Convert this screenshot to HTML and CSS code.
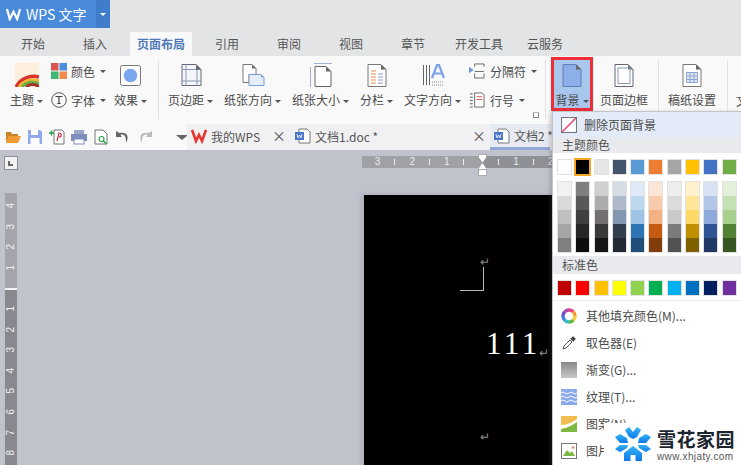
FILE: index.html
```html
<!DOCTYPE html>
<html lang="zh-CN">
<head>
  <meta charset="UTF-8">
  <title>WPS 文字</title>
  <link rel="stylesheet" href="styles.css">
</head>
<body>
  <div class="titlebar">
    <div class="app-btn">
      <svg class="app-logo" viewBox="0 0 16 14"><path d="M1 1l3 11 4-8 4 8 3-11" fill="none" stroke="#fff" stroke-width="2.4"/></svg>
      <span class="app-name">WPS 文字</span>
      <span class="app-drop"><i class="caret white"></i></span>
    </div>
  </div>
  <div class="tabs">
    <div class="tab">开始</div>
    <div class="tab">插入</div>
    <div class="tab wide active">页面布局</div>
    <div class="tab">引用</div>
    <div class="tab">审阅</div>
    <div class="tab">视图</div>
    <div class="tab">章节</div>
    <div class="tab wide">开发工具</div>
    <div class="tab">云服务</div>
  </div>

  <div class="ribbon">
    <div class="group first">
      <div class="item">
        <svg class="big" viewBox="0 0 24 24">
          <rect width="24" height="24" fill="#fdeede"/>
          <path d="M1 24A20 19 0 0 1 24 14" fill="none" stroke="#d8322a" stroke-width="3.5"/>
          <path d="M4 24A16 15 0 0 1 24 18" fill="none" stroke="#f2b430" stroke-width="3"/>
          <path d="M7 24A13 12 0 0 1 24 21" fill="none" stroke="#62b046" stroke-width="3"/>
          <path d="M11 24A9 8 0 0 1 24 24" fill="none" stroke="#a83228" stroke-width="3"/>
        </svg>
        <div class="label">主题<i class="caret"></i></div>
      </div>
      <div class="stack">
        <div class="row">
          <svg class="small" viewBox="0 0 16 16"><rect width="7.5" height="7.5" fill="#d9534f"/><rect x="8.5" width="7.5" height="7.5" fill="#4a8ce0"/><rect y="8.5" width="7.5" height="7.5" fill="#3db870"/><rect x="8.5" y="8.5" width="7.5" height="7.5" fill="#f08a4b"/></svg>
          <span>颜色</span><i class="caret"></i>
        </div>
        <div class="row">
          <svg class="small" viewBox="0 0 16 16"><circle cx="8" cy="8" r="7.3" fill="none" stroke="#555"/><path d="M4.5 4.5h7M8 4.5v7M6.3 11.5h3.4" fill="none" stroke="#444" stroke-width="1.2"/></svg>
          <span>字体</span><i class="caret"></i>
        </div>
      </div>
      <div class="item">
        <svg class="big" viewBox="0 0 24 24"><rect x="1.5" y="2.5" width="20" height="20" rx="2" fill="#fff" stroke="#777"/><circle cx="11.5" cy="12.5" r="6.8" fill="#7aa5ef"/></svg>
        <div class="label">效果<i class="caret"></i></div>
      </div>
    </div>

    <div class="group second">
      <div class="item">
        <svg class="big" viewBox="0 0 24 24"><path d="M3 1.5h14l5 5v16H3z" fill="#f4f6fb" stroke="#667"/><path d="M3 6.5h19M3 18h19M7 1.5v21M18 6.5v16" fill="none" stroke="#8a9ab8"/><path d="M17 1.5l5 5h-5z" fill="#666"/></svg>
        <div class="label">页边距<i class="caret"></i></div>
      </div>
      <div class="item">
        <svg class="big" viewBox="0 0 24 24"><path d="M2 1.5h9l4 4v6H8v8H2z" fill="#fff" stroke="#777"/><path d="M11 1.5l4 4h-4z" fill="#666"/><path d="M8 11.5h12l3 3v8H8z" fill="#e6eefb" stroke="#7a99cc"/><path d="M20 11.5l3 3h-3z" fill="#7a99cc"/></svg>
        <div class="label">纸张方向<i class="caret"></i></div>
      </div>
      <div class="item">
        <svg class="big" viewBox="0 0 24 24"><path d="M5 .5h18M1.500 4v20" fill="none" stroke="#9db2d6"/><path d="M6 3.500h11l5 5v15H6z" fill="#fff" stroke="#666"/><path d="M17 3.500l5 5h-5z" fill="#666"/></svg>
        <div class="label">纸张大小<i class="caret"></i></div>
      </div>
      <div class="item">
        <svg class="big" viewBox="0 0 24 24"><path d="M3 1.500h13l5 5v17H3z" fill="#fff" stroke="#777"/><path d="M16 1.500l5 5h-5z" fill="#666"/><path d="M6 8h5M6 11h5M6 14h5M6 17h5M6 20h5" stroke="#e8874e"/><path d="M13 11h5M13 14h5M13 17h5M13 20h5" stroke="#8a9ab8"/></svg>
        <div class="label">分栏<i class="caret"></i></div>
      </div>
      <div class="item">
        <svg class="big" viewBox="0 0 24 24"><path d="M2.500 2v20M5.500 2v20M8.500 2v20" stroke="#666"/><path d="M11 15l5-13h2l5 13M13 10.500h8" fill="none" stroke="#7aa0e8" stroke-width="2.200"/><path d="M11 19h12M11 22h12" stroke="#8a8a8a" stroke-dasharray="1 1"/></svg>
        <div class="label">文字方向<i class="caret"></i></div>
      </div>
      <div class="stack tight">
        <div class="row">
          <svg class="small" viewBox="0 0 17 17"><path d="M0 4l5 3.500L0 11z" fill="#6f95dc"/><path d="M6 4V1h10v3M6 9h10M6 11v5h10v-5" fill="none" stroke="#666"/></svg>
          <span>分隔符</span><i class="caret"></i>
        </div>
        <div class="row">
          <svg class="small" viewBox="0 0 17 17"><path d="M6 1h8l2 2v13H6z" fill="#fff" stroke="#666"/><path d="M8 5h6M8 8h6" stroke="#d9534f"/><path d="M1 2h3M1 5.500h3M1 9h3M1 12.500h3M1 16h3" stroke="#555"/></svg>
          <span>行号</span><i class="caret"></i>
        </div>
      </div>
      <span class="launcher"></span>
    </div>

    <div class="group third">
      <div class="item picked">
        <svg class="big" viewBox="0 0 24 24"><path d="M3 1.500h13l5 5v17H3z" fill="#8caee9" stroke="#5f7fb8"/><path d="M16 1.500l5 5h-5z" fill="#666"/></svg>
        <div class="label">背景<i class="caret"></i></div>
      </div>
      <div class="item">
        <svg class="big" viewBox="0 0 24 24"><path d="M3 1.500h13l5 5v17H3z" fill="#fff" stroke="#667"/><path d="M16 1.500l5 5h-5z" fill="#666"/><rect x="6" y="5" width="12" height="15.500" fill="none" stroke="#8a9ab8"/></svg>
        <div class="label">页面边框</div>
      </div>
    </div>

    <div class="group fourth">
      <div class="item">
        <svg class="big" viewBox="0 0 24 24"><path d="M3 1.500h13l5 5v17H3z" fill="#fff" stroke="#777"/><path d="M16 1.500l5 5h-5z" fill="#666"/><path d="M6.500 9.500h11v10h-11zM6.500 13h11M6.500 16.500h11M10 9.500v10M14 9.500v10" fill="#dfe7f5" stroke="#8ea6cf"/></svg>
        <div class="label">稿纸设置</div>
      </div>
    </div>

    <div class="group fifth"><div class="label">文字</div></div>
  </div>

  <div class="docbar">
    <div class="quick">
      <svg class="qa" viewBox="0 0 16 16"><path d="M1 3h5l1 2h6v2H4L1 14z" fill="#c9832a"/><path d="M4 7h12l-3 7H1z" fill="#f39a35"/></svg>
      <svg class="qa" viewBox="0 0 16 16"><path d="M1 1h12l2 2v12H1z" fill="#92a9ec"/><rect x="4" y="1" width="7" height="5" fill="#fff"/><rect x="3.500" y="9" width="9" height="6" fill="#fff"/></svg>
      <svg class="qa" viewBox="0 0 16 16"><path d="M5 1h8l2 2v12H5z" fill="#fff" stroke="#777"/><path d="M0 4h5M2.500 1.500v5" stroke="#2ea44f" stroke-width="1.500"/><path d="M8 12l2-8c3 0 3 4 0 4" fill="none" stroke="#c8324a" stroke-width="1.200"/></svg>
      <svg class="qa" viewBox="0 0 16 16"><rect x="3" y="1" width="10" height="4" fill="#9aa6cc"/><rect y="5" width="16" height="7" fill="#7f8dbb"/><rect x="3" y="10" width="10" height="5" fill="#fff" stroke="#7f8dbb"/></svg>
      <svg class="qa" viewBox="0 0 16 16"><path d="M2 1h8l4 4v10H2z" fill="#fff" stroke="#777"/><circle cx="8.500" cy="10" r="2.500" fill="none" stroke="#2ea44f" stroke-width="1.200"/><path d="M10.500 12l3 3" stroke="#2ea44f" stroke-width="1.500"/></svg>
      <svg class="qa" viewBox="0 0 16 16"><path d="M1 2v6h6L5.500 6c3-1.500 6 1 5.500 8 3.500-6 1.500-11.500-6.500-10z" fill="#666"/></svg>
      <svg class="qa" viewBox="0 0 16 16"><path d="M15 2v6H9l1.500-2c-3-1.500-6 1-5.500 8-3.500-6-1.500-11.500 6.500-10z" fill="#bbb"/></svg>
      <span class="qa-sep"></span>
      <i class="caret dark"></i>
    </div>
    <div class="doctabs">
      <div class="doctab home">
        <svg class="doc-ico" viewBox="0 0 16 14"><path d="M1 1l4 11 3-6 3 6 4-11" fill="none" stroke="#e8342c" stroke-width="2.600"/></svg>
        <span>我的WPS</span><b class="close">×</b>
      </div>
      <div class="doctab one">
        <svg class="doc-ico" viewBox="0 0 16 16"><path d="M4 1h8l3 3v11H4z" fill="#fff" stroke="#777"/><rect y="4" width="9" height="8" fill="#4a76c8"/><path d="M2 6l1 4 1.500-3 1.500 3 1-4" fill="none" stroke="#fff" stroke-width=".8"/></svg>
        <span>文档1.doc *</span><b class="close">×</b>
      </div>
      <div class="doctab current">
        <svg class="doc-ico" viewBox="0 0 16 16"><path d="M4 1h8l3 3v11H4z" fill="#fff" stroke="#777"/><rect y="4" width="9" height="8" fill="#4a76c8"/><path d="M2 6l1 4 1.500-3 1.500 3 1-4" fill="none" stroke="#fff" stroke-width=".8"/></svg>
        <span>文档2 *</span>
      </div>
    </div>
  </div>

  <div class="workspace">
    <div class="side">
      <div class="corner"><span></span></div>
      <div class="vruler">
        <div class="vtop"><span>4</span><span>3</span><span>2</span><span>1</span></div>
        <div class="vbottom"><span>1</span><span>2</span><span>3</span><span>4</span><span>5</span><span>6</span><span>7</span><span>8</span></div>
      </div>
    </div>
    <div class="main">
      <div class="hruler">
        <span>3</span><u></u><span>2</span><u></u><span>1</span><u></u><span></span><u></u><span>1</span><u></u><span>2</span>
        <svg class="handle" viewBox="0 0 9 22"><path d="M.5.500h8v3L4.500 9 .5 3.500z" fill="#fff" stroke="#888" stroke-width=".6"/><path d="M4.500 9l4 6H.5z" fill="#fff"/><rect x=".5" y="15.500" width="8" height="6" fill="#fff" stroke="#888" stroke-width=".6"/></svg>
      </div>
      <div class="page">
        <div class="mark">↵</div>
        <div class="crop"></div>
        <div class="number"><span>111</span><span class="mark inline">↵</span></div>
        <div class="mark last">↵</div>
      </div>
    </div>
  </div>

  <div class="menu">
    <div class="menu-top">
      <svg class="menu-ico" viewBox="0 0 15 15"><rect x=".5" y=".5" width="14" height="14" fill="#fff" stroke="#777"/><path d="M1 14L14 1" stroke="#e8406a" stroke-width="1.300"/></svg>
      <span>删除页面背景</span>
    </div>
    <div class="menu-head">主题颜色</div>
    <div class="swatches theme">
      <i class="s-white"></i><i class="s-black"></i><i class="s-e7"></i><i class="s-44"></i><i class="s-5b"></i><i class="s-ed"></i><i class="s-a5"></i><i class="s-ff"></i><i class="s-4472"></i><i class="s-70"></i>
    </div>
    <div class="swatches shades">
      <i class="col1"></i><i class="col2"></i><i class="col3"></i><i class="col4"></i><i class="col5"></i><i class="col6"></i><i class="col7"></i><i class="col8"></i><i class="col9"></i><i class="col10"></i>
    </div>
    <div class="menu-head second-head">标准色</div>
    <div class="swatches standard">
      <i class="std1"></i><i class="std2"></i><i class="std3"></i><i class="std4"></i><i class="std5"></i><i class="std6"></i><i class="std7"></i><i class="std8"></i><i class="std9"></i><i class="std10"></i>
    </div>
    <div class="menu-items">
      <div class="menu-item">
        <svg class="menu-ico" viewBox="0 0 16 16"><g fill="none" stroke-width="3.400"><path d="M8 2a6 6 0 0 1 4.200 1.800" stroke="#e8457a"/><path d="M12.200 3.800A6 6 0 0 1 14 8" stroke="#f39a35"/><path d="M14 8a6 6 0 0 1-1.800 4.200" stroke="#f5cf3a"/><path d="M12.200 12.200A6 6 0 0 1 8 14" stroke="#62b846"/><path d="M8 14a6 6 0 0 1-4.200-1.800" stroke="#35b8c8"/><path d="M3.800 12.200A6 6 0 0 1 2 8" stroke="#3f7fe0"/><path d="M2 8a6 6 0 0 1 1.800-4.200" stroke="#6a50c8"/><path d="M3.800 3.800A6 6 0 0 1 8 2" stroke="#b048b8"/></g></svg>
        <span>其他填充颜色(M)...</span>
      </div>
      <div class="menu-item">
        <svg class="menu-ico" viewBox="0 0 16 16"><path d="M2 14l1-3 6-6 2 2-6 6z" fill="#fff" stroke="#555"/><path d="M9 3.500l2-1 1-1.500 3 3-1.500 1-1 2z" fill="#444"/></svg>
        <span>取色器(E)</span>
      </div>
      <div class="menu-item">
        <span class="grad-ico"></span>
        <span>渐变(G)...</span>
      </div>
      <div class="menu-item">
        <svg class="menu-ico" viewBox="0 0 16 16"><rect width="16" height="16" fill="#8aa8ec"/><path d="M0 4q2-2 4 0t4 0 4 0 4 0M0 8q2-2 4 0t4 0 4 0 4 0M0 12q2-2 4 0t4 0 4 0 4 0" fill="none" stroke="#fff"/></svg>
        <span>纹理(T)...</span>
      </div>
      <div class="menu-item">
        <svg class="menu-ico" viewBox="0 0 16 16"><rect width="16" height="16" fill="#f2bd4e"/><path d="M0 9q8 0 16-6v3Q8 12 0 13z" fill="#fff"/><path d="M0 13Q8 12 16 6v10H0z" fill="#7cb842"/></svg>
        <span>图案(N)...</span>
      </div>
      <div class="menu-item">
        <svg class="menu-ico" viewBox="0 0 16 16"><rect x=".5" y=".5" width="15" height="15" fill="#fff" stroke="#777"/><path d="M2 13l4-6 3 3 2-2 3 5z" fill="#7cb842"/><circle cx="12" cy="4.500" r="1.300" fill="#e88a6a"/></svg>
        <span>图片(P)...</span>
      </div>
    </div>
  </div>

  <div class="watermark">
    <svg class="flake" viewBox="0 0 36 34">
      <defs>
        <linearGradient id="flake-blue" x1="0" y1="0" x2="0" y2="1"><stop offset="0" stop-color="#33b4f8"/><stop offset="1" stop-color="#1078e8"/></linearGradient>
      </defs>
      <g fill="url(#flake-blue)">
        <path d="M10 3l4-3 4 5 4-5 4 3-4 7-4 2-4-2z"/>
        <path d="M0 10l5-3 7 4 1 5H5zM36 10l-5-3-7 4-1 5h8z"/>
        <path d="M0 22l5 3 7-4 1-3H5zM36 22l-5 3-7-4-1-3h8z"/>
        <path d="M18 19l9 7v8H9v-8z"/>
      </g>
      <path d="M15.500 28h5v6h-5z" fill="#fff"/>
    </svg>
    <div class="brand">
      <div class="brand-name">雪花家园</div>
      <div class="brand-url">www.xhjaty.com</div>
    </div>
  </div>
</body>
</html>
```

FILE: styles.css
```css
* {
  box-sizing: border-box;
}
html, body {
  margin: 0;
  height: 465px;
  overflow: hidden;
}
body {
  position: relative;
  width: 741px;
  font-family: "Noto Sans CJK SC", "Liberation Sans", sans-serif;
  font-size: 12px;
  color: #4a4a4a;
  background: #c1c3cc;
}
i, u, b {
  font-style: normal;
  text-decoration: none;
}
.caret {
  display: inline-block;
  width: 0;
  height: 0;
  margin-left: 3px;
  border: 3px solid transparent;
  border-top: 3px solid #555;
  border-bottom: 0;
  vertical-align: middle;
}
.caret.white {
  margin: 0;
  border-top-color: #fff;
}
.caret.dark {
  margin-left: 9px;
  border-width: 5px 6px 0;
  border-top-color: #666;
}

/* title and tabs */
.titlebar {
  height: 28px;
  background: #e3e4e6;
}
.app-btn {
  display: flex;
  align-items: center;
  width: 110px;
  height: 28px;
  padding-left: 6px;
  background: #4a8adb;
  color: #fff;
}
.app-logo {
  width: 15px;
  height: 13px;
}
.app-name {
  margin-left: 5px;
  width: 70px;
  font-size: 14px;
}
.app-drop {
  display: flex;
  align-items: center;
  justify-content: center;
  width: 14px;
  height: 28px;
  background: #3f7cc9;
}
.tabs {
  display: flex;
  height: 28px;
  padding: 4px 0 0 2px;
  background: #e3e4e6;
}
.tab {
  width: 62px;
  height: 24px;
  line-height: 24px;
  text-align: center;
  color: #555;
}
.tab.wide {
  margin: 0 4px;
}
.tab.active {
  background: #f9f9f9;
  color: #4f79b8;
  font-weight: 700;
}

/* ribbon */
.ribbon {
  display: flex;
  height: 68px;
  overflow: hidden;
  background: #f9f9f9;
}
.group {
  display: flex;
  flex: none;
  height: 59px;
  margin-top: 4px;
  border-right: 1px solid #e2e2e4;
}
.first {
  width: 159px;
  padding-left: 10px;
  gap: 8px;
}
.second {
  position: relative;
  width: 387px;
  padding-left: 9px;
  gap: 11px;
}
.third {
  width: 113px;
  padding-left: 5px;
  gap: 7px;
}
.fourth {
  width: 69px;
  padding-left: 9px;
}
.fifth {
  padding: 32px 0 0 8px;
  border-right: 0;
  white-space: nowrap;
}
.fifth .label {
  margin-top: 0;
}
.item {
  display: flex;
  flex-direction: column;
  align-items: center;
  height: 52px;
}
.big {
  width: 24px;
  height: 24px;
  margin-top: 3px;
  flex: none;
}
.label {
  margin-top: 4px;
  height: 18px;
  line-height: 18px;
  white-space: nowrap;
}
.stack {
  display: flex;
  flex-direction: column;
  padding-top: 2px;
  gap: 11px;
}
.stack.tight {
  margin-left: -3px;
}
.row {
  display: flex;
  align-items: center;
  height: 18px;
  white-space: nowrap;
}
.row span {
  margin-left: 4px;
}
.tight .row span {
  margin-left: 5px;
}
.row .caret {
  margin-left: 5px;
}
.small {
  width: 16px;
  height: 16px;
}
.launcher {
  position: absolute;
  right: 6px;
  bottom: 1px;
  width: 6px;
  height: 6px;
  border: 1px solid #888;
  border-top-color: #bbb;
}
.picked {
  width: 42px;
  height: 54px;
  margin-top: -3px;
  border: 3px solid #f02c35;
  background: #a9c6ec;
}
.picked .big {
  margin-top: 3px;
}
.picked .label {
  margin-top: 4px;
}

/* quick access and document tabs */
.docbar {
  display: flex;
  height: 26px;
  background: #f9f9f9;
}
.quick {
  display: flex;
  flex: none;
  align-items: center;
  width: 187px;
  padding-left: 5px;
  gap: 6px;
}
.qa {
  width: 16px;
  height: 16px;
  flex: none;
}
.qa-sep {
  width: 1px;
  height: 22px;
  margin-left: 2px;
  background: #ddd;
}
.doctabs {
  display: flex;
  flex: 1;
  background: #f1f1f3;
}
.doctab {
  display: flex;
  flex: none;
  align-items: center;
  position: relative;
  padding-bottom: 2px;
  white-space: nowrap;
  color: #555;
}
.doc-ico {
  width: 16px;
  height: 16px;
  margin-right: 4px;
  flex: none;
}
.home {
  width: 103px;
  padding-left: 4px;
}
.one {
  width: 200px;
  padding-left: 5px;
}
.current {
  width: 60px;
  padding: 0 0 0 4px;
  background: #e8eaf1;
  border-bottom: 3px solid #8fa8d8;
}
.close {
  position: absolute;
  right: 4px;
  top: 1px;
  font-weight: 400;
  font-size: 14px;
  color: #555;
}

/* document area */
.workspace {
  display: flex;
  height: 315px;
  overflow: hidden;
  background: #c1c3cc;
}
.side {
  width: 22px;
  flex: none;
  padding: 6px 0 0 4px;
}
.corner {
  width: 14px;
  height: 14px;
  padding: 4px 0 0 3px;
  background: #f3f3f5;
  border: 1px solid #8c8d92;
}
.corner span {
  display: block;
  width: 5px;
  height: 5px;
  border-left: 2px solid #666;
  border-bottom: 2px solid #666;
}
.vruler {
  width: 12px;
  margin: 23px 0 0 1px;
  color: #f2f2f4;
  font-family: "Liberation Sans", sans-serif;
  font-size: 10px;
}
.vtop, .vbottom {
  display: flex;
  flex-direction: column;
  align-items: center;
}
.vtop {
  height: 97px;
  padding-top: 3px;
  background: #a4a5ab;
  border-bottom: 2px solid #f2f2f4;
}
.vbottom {
  height: 176px;
  padding-top: 9px;
  background: #88898f;
}
.vruler span {
  flex: none;
  height: 20.6px;
  line-height: 12px;
  text-align: center;
  writing-mode: vertical-rl;
  transform: rotate(180deg);
}
.main {
  flex: 1;
  min-width: 0;
}
.hruler {
  display: flex;
  position: relative;
  width: 200px;
  height: 12px;
  margin: 6px 0 0 340px;
  padding-left: 7px;
  background: linear-gradient(to right, #a0a1a6 120px, #8f9096 120px);
  color: #eceded;
  font-family: "Liberation Sans", sans-serif;
  font-size: 10px;
  line-height: 12px;
}
.hruler span, .hruler u {
  position: relative;
  width: 17.3px;
  flex: none;
  text-align: center;
}
.hruler u::before {
  content: "";
  position: absolute;
  left: 8px;
  top: 3px;
  width: 1px;
  height: 6px;
  background: #eceded;
}
.handle {
  position: absolute;
  left: 116px;
  top: -2px;
  width: 9px;
  height: 22px;
}
.page {
  width: 400px;
  height: 280px;
  margin: 27px 0 0 342px;
  padding: 60px 0 0 96px;
  background: #000;
  box-shadow: -3px -1px 4px #aeb0b9;
}
.mark {
  height: 12px;
  margin-left: 20px;
  color: #8a8a8a;
  font-size: 12px;
  line-height: 12px;
}
.crop {
  width: 24px;
  height: 24px;
  border-right: 1px solid #bbb;
  border-bottom: 1px solid #bbb;
}
.number {
  display: flex;
  align-items: flex-end;
  margin: 38px 0 0 26px;
  height: 30px;
  color: #fff;
  font-family: "Liberation Serif", serif;
  font-size: 31px;
  letter-spacing: 3.5px;
  line-height: 30px;
  white-space: nowrap;
}
.mark.inline {
  margin-left: -2px;
  letter-spacing: 0;
}
.mark.last {
  margin-top: 71px;
}

/* background menu */
.menu {
  position: absolute;
  left: 552px;
  top: 111px;
  width: 189px;
  height: 354px;
  background: #fff;
  border-left: 1px solid #c5c6ca;
  border-top: 1px solid #c5c6ca;
  box-shadow: -2px 1px 4px rgba(80, 80, 90, .3);
}
.menu-top {
  display: flex;
  align-items: center;
  height: 25px;
  padding-left: 8px;
  background: #e3ebf8;
}
.menu-top span {
  margin-left: 7px;
}
.menu-ico {
  width: 16px;
  height: 16px;
  flex: none;
}
.menu-head {
  height: 16px;
  line-height: 16px;
  padding-left: 9px;
  background: #e8eaee;
  color: #555;
}
.second-head {
  height: 18px;
  line-height: 18px;
}
.swatches {
  display: flex;
  gap: 5.3px;
  padding-left: 5px;
}
.swatches i {
  display: block;
  width: 13px;
  box-shadow: 0 0 0 1px #e2e2e2;
}
.theme {
  height: 14px;
  margin-top: 7px;
}
.shades {
  height: 70px;
  margin-top: 8px;
  margin-bottom: 4px;
}
.standard {
  height: 14px;
  margin-top: 7px;
}
.s-white { background: #fff; }
.s-black { background: #000; box-shadow: 0 0 0 2px #f5a623 !important; }
.s-e7 { background: #e7e6e6; }
.s-44 { background: #44546a; }
.s-5b { background: #5b9bd5; }
.s-ed { background: #ed7d31; }
.s-a5 { background: #a5a5a5; }
.s-ff { background: #ffc000; }
.s-4472 { background: #4472c4; }
.s-70 { background: #70ad47; }
.col1 { background: linear-gradient(#f2f2f2 20%, #d9d9d9 20% 40%, #bfbfbf 40% 60%, #a6a6a6 60% 80%, #808080 80%); }
.col2 { background: linear-gradient(#7f7f7f 20%, #595959 20% 40%, #3f3f3f 40% 60%, #262626 60% 80%, #0d0d0d 80%); }
.col3 { background: linear-gradient(#d0cece 20%, #aeabab 20% 40%, #757070 40% 60%, #3a3838 60% 80%, #171616 80%); }
.col4 { background: linear-gradient(#d6dce4 20%, #adb9ca 20% 40%, #8497b0 40% 60%, #323f4f 60% 80%, #222a35 80%); }
.col5 { background: linear-gradient(#deeaf6 20%, #bdd7ee 20% 40%, #9cc3e5 40% 60%, #2e75b5 60% 80%, #1f4e79 80%); }
.col6 { background: linear-gradient(#fbe5d5 20%, #f7cbac 20% 40%, #f4b183 40% 60%, #c55a11 60% 80%, #833c0b 80%); }
.col7 { background: linear-gradient(#ededed 20%, #dbdbdb 20% 40%, #c9c9c9 40% 60%, #7b7b7b 60% 80%, #525252 80%); }
.col8 { background: linear-gradient(#fff2cc 20%, #ffe599 20% 40%, #ffd966 40% 60%, #bf9000 60% 80%, #7f6000 80%); }
.col9 { background: linear-gradient(#d9e2f3 20%, #b4c6e7 20% 40%, #8eaadb 40% 60%, #2f5496 60% 80%, #1f3864 80%); }
.col10 { background: linear-gradient(#e2efd9 20%, #c5e0b3 20% 40%, #a8d08d 40% 60%, #538135 60% 80%, #375623 80%); }
.std1 { background: #c00000; }
.std2 { background: #ff0000; }
.std3 { background: #ffc000; }
.std4 { background: #ffff00; }
.std5 { background: #92d050; }
.std6 { background: #00b050; }
.std7 { background: #00b0f0; }
.std8 { background: #0070c0; }
.std9 { background: #002060; }
.std10 { background: #7030a0; }
.menu-items {
  margin-top: 5px;
  padding-top: 1px;
  border-top: 1px solid #eeeeee;
}
.menu-item {
  display: flex;
  align-items: center;
  height: 27px;
  padding-left: 8px;
}
.menu-item span:last-child {
  margin-left: 9px;
}
.grad-ico {
  width: 16px;
  height: 16px;
  background: linear-gradient(#888, #c8c8c8);
}

/* site mark over the corner */
.watermark {
  display: flex;
  align-items: center;
  position: absolute;
  left: 604px;
  top: 423px;
  width: 137px;
  height: 42px;
  padding-left: 11px;
  background: #fff;
}
.flake {
  width: 36px;
  height: 34px;
  flex: none;
}
.brand {
  margin-left: 6px;
}
.brand-name {
  height: 24px;
  color: #1c2430;
  font-size: 19px;
  font-weight: 700;
  line-height: 24px;
  letter-spacing: .5px;
}
.brand-url {
  color: #555;
  font-family: "Liberation Sans", sans-serif;
  font-size: 10px;
  line-height: 11px;
  letter-spacing: .4px;
}
```
